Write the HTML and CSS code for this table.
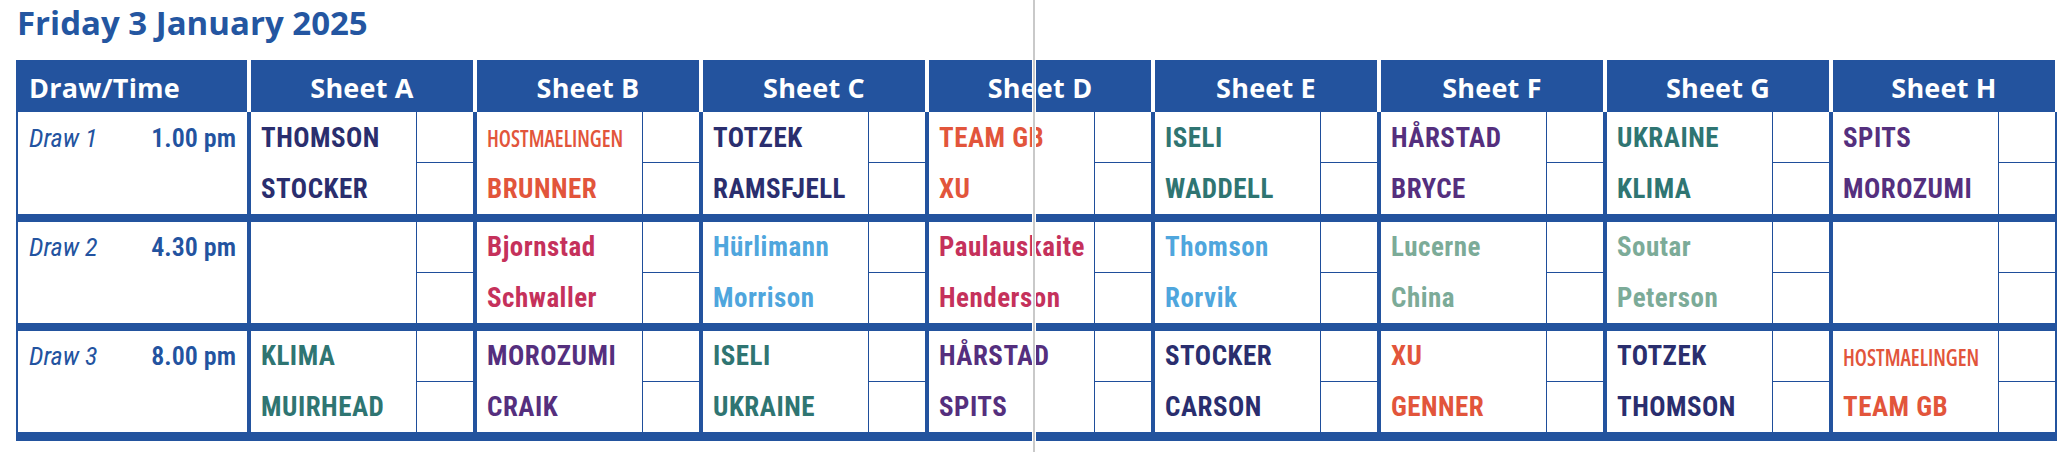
FILE: index.html
```html
<!DOCTYPE html>
<html>
<head>
<meta charset="utf-8">
<title>Friday 3 January 2025</title>
<link rel="stylesheet" href="styles.css">
</head>
<body>
<div class="page">
  <h1 class="title">Friday 3 January 2025</h1>
  <div class="schedule">
    <div class="head">
      <div class="hcell hdraw">Draw/Time</div>
      <div class="hcell">Sheet A</div>
      <div class="hcell">Sheet B</div>
      <div class="hcell">Sheet C</div>
      <div class="hcell">Sheet D</div>
      <div class="hcell">Sheet E</div>
      <div class="hcell">Sheet F</div>
      <div class="hcell">Sheet G</div>
      <div class="hcell">Sheet H</div>
    </div>
    <div class="rows">
      <div class="row first">
        <div class="when"><div class="when-top"><span class="draw">Draw 1</span><span class="time">1.00 pm</span></div></div>
        <div class="sheet"><div class="team navy">THOMSON</div><div class="score top"></div><div class="team navy">STOCKER</div><div class="score"></div></div>
        <div class="sheet"><div class="team orange narrow"><span>HOSTMAELINGEN</span></div><div class="score top"></div><div class="team orange">BRUNNER</div><div class="score"></div></div>
        <div class="sheet"><div class="team navy">TOTZEK</div><div class="score top"></div><div class="team navy">RAMSFJELL</div><div class="score"></div></div>
        <div class="sheet"><div class="team orange">TEAM GB</div><div class="score top"></div><div class="team orange">XU</div><div class="score"></div></div>
        <div class="sheet"><div class="team teal">ISELI</div><div class="score top"></div><div class="team teal">WADDELL</div><div class="score"></div></div>
        <div class="sheet"><div class="team purple">HÅRSTAD</div><div class="score top"></div><div class="team purple">BRYCE</div><div class="score"></div></div>
        <div class="sheet"><div class="team teal">UKRAINE</div><div class="score top"></div><div class="team teal">KLIMA</div><div class="score"></div></div>
        <div class="sheet"><div class="team purple">SPITS</div><div class="score top"></div><div class="team purple">MOROZUMI</div><div class="score"></div></div>
      </div>
      <div class="row">
        <div class="when"><div class="when-top"><span class="draw">Draw 2</span><span class="time">4.30 pm</span></div></div>
        <div class="sheet"><div class="team"></div><div class="score top"></div><div class="team"></div><div class="score"></div></div>
        <div class="sheet"><div class="team crimson">Bjornstad</div><div class="score top"></div><div class="team crimson">Schwaller</div><div class="score"></div></div>
        <div class="sheet"><div class="team sky">Hürlimann</div><div class="score top"></div><div class="team sky">Morrison</div><div class="score"></div></div>
        <div class="sheet"><div class="team crimson">Paulauskaite</div><div class="score top"></div><div class="team crimson">Henderson</div><div class="score"></div></div>
        <div class="sheet"><div class="team sky">Thomson</div><div class="score top"></div><div class="team sky">Rorvik</div><div class="score"></div></div>
        <div class="sheet"><div class="team sage">Lucerne</div><div class="score top"></div><div class="team sage">China</div><div class="score"></div></div>
        <div class="sheet"><div class="team sage">Soutar</div><div class="score top"></div><div class="team sage">Peterson</div><div class="score"></div></div>
        <div class="sheet"><div class="team"></div><div class="score top"></div><div class="team"></div><div class="score"></div></div>
      </div>
      <div class="row">
        <div class="when"><div class="when-top"><span class="draw">Draw 3</span><span class="time">8.00 pm</span></div></div>
        <div class="sheet"><div class="team teal">KLIMA</div><div class="score top"></div><div class="team teal">MUIRHEAD</div><div class="score"></div></div>
        <div class="sheet"><div class="team purple">MOROZUMI</div><div class="score top"></div><div class="team purple">CRAIK</div><div class="score"></div></div>
        <div class="sheet"><div class="team teal">ISELI</div><div class="score top"></div><div class="team teal">UKRAINE</div><div class="score"></div></div>
        <div class="sheet"><div class="team purple">HÅRSTAD</div><div class="score top"></div><div class="team purple">SPITS</div><div class="score"></div></div>
        <div class="sheet"><div class="team navy">STOCKER</div><div class="score top"></div><div class="team navy">CARSON</div><div class="score"></div></div>
        <div class="sheet"><div class="team orange">XU</div><div class="score top"></div><div class="team orange">GENNER</div><div class="score"></div></div>
        <div class="sheet"><div class="team navy">TOTZEK</div><div class="score top"></div><div class="team navy">THOMSON</div><div class="score"></div></div>
        <div class="sheet"><div class="team orange narrow"><span>HOSTMAELINGEN</span></div><div class="score top"></div><div class="team orange">TEAM GB</div><div class="score"></div></div>
      </div>
    </div>
  </div>
</div>
<div class="guide"></div>
</body>
</html>
```
FILE: styles.css
```css
* { box-sizing: border-box; }
html, body { margin: 0; padding: 0; background: #fff; }
body {
  width: 2066px;
  height: 452px;
  overflow: hidden;
  font-family: "Open Sans", "Noto Sans", sans-serif;
}
.page { padding-left: 16px; }
.title {
  margin: 0;
  height: 60px;
  padding: 3px 0 0 1px;
  font-size: 33px;
  line-height: 40px;
  font-weight: 700;
  color: #2456a1;
}
.schedule { width: 2041px; }
.head {
  display: grid;
  grid-template-columns: 231px repeat(8, 222px);
  column-gap: 4px;
  height: 52px;
}
.hcell {
  background: #23539e;
  color: #fff;
  font-size: 27px;
  letter-spacing: 0.2px;
  font-weight: 700;
  display: flex;
  align-items: center;
  justify-content: center;
  padding-top: 2px;
}
.hcell.hdraw { justify-content: flex-start; padding-left: 13px; }
.rows {
  display: grid;
  row-gap: 8px;
  background: #23539e;
  padding: 0 1px 9px 2px;
}
.row {
  display: grid;
  grid-template-columns: 229px repeat(8, 222px);
  column-gap: 4px;
  height: 101px;
}
.row.first { height: 102px; }
.when { background: #fff; display: grid; grid-template-rows: 1fr 1fr; }
.when-top {
  display: flex;
  justify-content: space-between;
  align-items: center;
  padding: 0 11px;
  color: #2353a0;
  font-family: "Roboto", "Open Sans", sans-serif;
  font-stretch: 87.5%;
  font-size: 26px;
}
.draw { font-style: italic; font-weight: 400; }
.time { font-weight: 600; }
.sheet {
  background: #fff;
  display: grid;
  grid-template-columns: minmax(0, 1fr) 57px;
  grid-template-rows: 1fr 1fr;
}
.score { border-left: 1px solid #1f4e9b; }
.score.top { border-bottom: 1px solid #1f4e9b; }
.team {
  display: flex;
  align-items: center;
  min-width: 0;
  padding-left: 10px;
  font-family: "Roboto", "Open Sans", sans-serif;
  font-stretch: 87.5%;
  font-size: 27px;
  letter-spacing: 0.5px;
  font-weight: 700;
  white-space: nowrap;
}
.team.narrow span {
  display: inline-block;
  font-family: "Open Sans", sans-serif;
  font-stretch: 87.5%;
  font-weight: 600;
  font-size: 24px;
  letter-spacing: 0;
  transform: scaleX(0.89);
  transform-origin: left center;
}
.navy { color: #2a2e6e; }
.orange { color: #e2553b; }
.teal { color: #2f7572; }
.purple { color: #552f7e; }
.crimson { color: #c5315b; }
.sky { color: #4fa6dd; }
.sage { color: #7cab98; }
.guide {
  position: fixed;
  left: 1032px;
  top: 0;
  width: 4px;
  height: 452px;
  background: #c9c9c9;
  border-left: 1px solid #fff;
  border-right: 1px solid #fff;
}
```
